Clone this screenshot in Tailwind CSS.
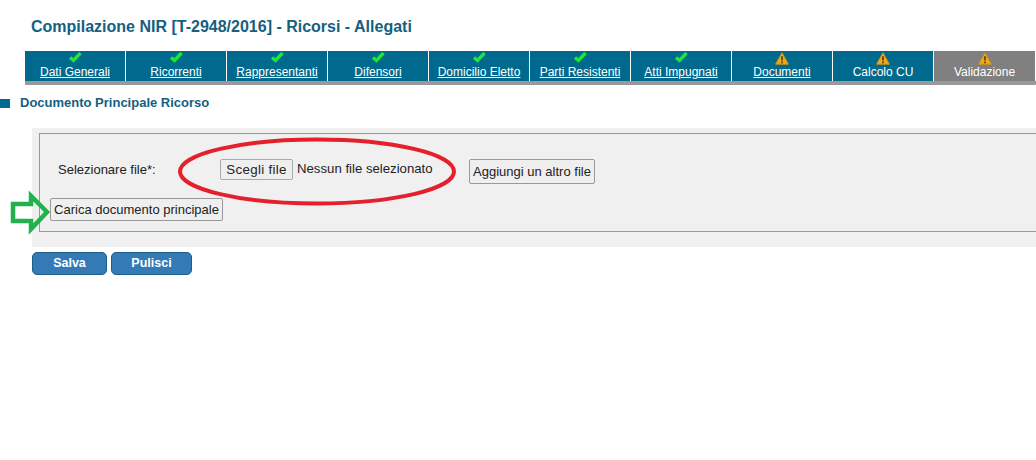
<!DOCTYPE html>
<html lang="it">
<head>
  <meta charset="UTF-8">
  <meta name="viewport" content="width=device-width, initial-scale=1.0">
  <title>Compilazione NIR</title>
  <script src="https://cdn.jsdelivr.net/npm/@tailwindcss/browser@4"></script>
</head>
<body class="bg-white h-[460px] w-[1036px] overflow-hidden font-['Liberation_Sans',Arial,sans-serif]">
  <h1 class="pt-[18px] pl-[31px] text-[16px] leading-[18px] font-bold text-[#15607f] h-[51px]">Compilazione NIR [T-2948/2016] - Ricorsi - Allegati</h1>

  <!-- tabs -->
  <nav class="ml-[25px] border-b-4 border-[#999999] flex h-[34px] text-[12px] leading-[14px] text-white text-center">
    <a class="w-[101px] h-[30px] bg-[#006a8e] border-r border-white flex flex-col items-center">
      <svg class="w-[14px] h-[11px] mt-[1px]" viewBox="0 0 14 11"><path d="M2 5.5 L5.5 8.5 L12.5 1" fill="none" stroke="#1de838" stroke-width="3.4"/></svg>
      <span class="underline mt-[2px]">Dati Generali</span>
    </a>
    <a class="w-[101px] h-[30px] bg-[#006a8e] border-r border-white flex flex-col items-center">
      <svg class="w-[14px] h-[11px] mt-[1px]" viewBox="0 0 14 11"><path d="M2 5.5 L5.5 8.5 L12.5 1" fill="none" stroke="#1de838" stroke-width="3.4"/></svg>
      <span class="underline mt-[2px]">Ricorrenti</span>
    </a>
    <a class="w-[101px] h-[30px] bg-[#006a8e] border-r border-white flex flex-col items-center">
      <svg class="w-[14px] h-[11px] mt-[1px]" viewBox="0 0 14 11"><path d="M2 5.5 L5.5 8.5 L12.5 1" fill="none" stroke="#1de838" stroke-width="3.4"/></svg>
      <span class="underline mt-[2px]">Rappresentanti</span>
    </a>
    <a class="w-[101px] h-[30px] bg-[#006a8e] border-r border-white flex flex-col items-center">
      <svg class="w-[14px] h-[11px] mt-[1px]" viewBox="0 0 14 11"><path d="M2 5.5 L5.5 8.5 L12.5 1" fill="none" stroke="#1de838" stroke-width="3.4"/></svg>
      <span class="underline mt-[2px]">Difensori</span>
    </a>
    <a class="w-[101px] h-[30px] bg-[#006a8e] border-r border-white flex flex-col items-center">
      <svg class="w-[14px] h-[11px] mt-[1px]" viewBox="0 0 14 11"><path d="M2 5.5 L5.5 8.5 L12.5 1" fill="none" stroke="#1de838" stroke-width="3.4"/></svg>
      <span class="underline mt-[2px]">Domicilio Eletto</span>
    </a>
    <a class="w-[101px] h-[30px] bg-[#006a8e] border-r border-white flex flex-col items-center">
      <svg class="w-[14px] h-[11px] mt-[1px]" viewBox="0 0 14 11"><path d="M2 5.5 L5.5 8.5 L12.5 1" fill="none" stroke="#1de838" stroke-width="3.4"/></svg>
      <span class="underline mt-[2px]">Parti Resistenti</span>
    </a>
    <a class="w-[101px] h-[30px] bg-[#006a8e] border-r border-white flex flex-col items-center">
      <svg class="w-[14px] h-[11px] mt-[1px]" viewBox="0 0 14 11"><path d="M2 5.5 L5.5 8.5 L12.5 1" fill="none" stroke="#1de838" stroke-width="3.4"/></svg>
      <span class="underline mt-[2px]">Atti Impugnati</span>
    </a>
    <a class="w-[101px] h-[30px] bg-[#006a8e] border-r border-white flex flex-col items-center">
      <svg class="w-[14px] h-[13px] mt-[1px]" viewBox="0 0 14 13"><path d="M7 .8 L13.4 12.2 H.6 Z" fill="#ecaa1e" stroke="#d1920f" stroke-linejoin="round"/><path d="M7 4.2 V8.6 M7 9.6 V11.2" stroke="#4a3000" stroke-width="1.5"/></svg>
      <span class="underline">Documenti</span>
    </a>
    <a class="w-[101px] h-[30px] bg-[#006a8e] border-r border-white flex flex-col items-center">
      <svg class="w-[14px] h-[13px] mt-[1px]" viewBox="0 0 14 13"><path d="M7 .8 L13.4 12.2 H.6 Z" fill="#ecaa1e" stroke="#d1920f" stroke-linejoin="round"/><path d="M7 4.2 V8.6 M7 9.6 V11.2" stroke="#4a3000" stroke-width="1.5"/></svg>
      <span>Calcolo CU</span>
    </a>
    <a class="w-[101px] h-[30px] bg-[#808080] flex flex-col items-center">
      <svg class="w-[14px] h-[13px] mt-[1px]" viewBox="0 0 14 13"><path d="M7 .8 L13.4 12.2 H.6 Z" fill="#ecaa1e" stroke="#d1920f" stroke-linejoin="round"/><path d="M7 4.2 V8.6 M7 9.6 V11.2" stroke="#4a3000" stroke-width="1.5"/></svg>
      <span>Validazione</span>
    </a>
  </nav>

  <!-- section heading -->
  <div class="flex items-center h-[14px] mt-[11px] text-[13px] font-bold text-[#15607f]">
    <span class="w-[10px] h-[9px] bg-[#006a8e]"></span>
    <span class="ml-[10px]">Documento Principale Ricorso</span>
  </div>

  <main class="relative pt-[18px]">
    <div class="ml-[32px] h-[119px] bg-[#f0f0f0] pl-[7px] pt-[5px]">
      <div class="h-[99px] border-l border-y border-[#999999] text-[13px] text-[#222222]">
        <div class="flex pt-[25px] h-[64px]">
          <label class="ml-[18px] w-[162px] pt-[3px] leading-[15px]">Selezionare file*:</label>
          <button class="w-[73px] h-[21px] bg-[#efefef] border border-[#aaaaaa] rounded-[2px] text-[13.33px] tracking-[0.3px] leading-[18px]">Scegli file</button>
          <span class="ml-[4px] w-[172px] pt-[2px] text-[13.2px] leading-[15px]">Nessun file selezionato</span>
          <button class="w-[126px] h-[25px] bg-[#efefef] border border-[#999999] rounded-[2px] text-[13px] leading-[22px]">Aggiungi un altro file</button>
        </div>
        <button class="ml-[10px] w-[173px] h-[23px] bg-[#efefef] border border-[#999999] rounded-[2px] text-[13px] leading-[20px]">Carica documento principale</button>
      </div>
    </div>

    <div class="ml-[32px] mt-[5px] flex gap-[4px] text-[12.5px] font-bold text-white">
      <button class="w-[75px] h-[23px] bg-[#337ab7] border border-[#1d5f87] rounded-[5px]">Salva</button>
      <button class="w-[81px] h-[23px] bg-[#337ab7] border border-[#1d5f87] rounded-[5px]">Pulisci</button>
    </div>

    <!-- hand-drawn annotations over the form; main starts at y=110 -->
    <svg class="absolute left-0 top-0 pointer-events-none" width="1036" height="200" viewBox="0 0 1036 200">
      <ellipse cx="317" cy="61.5" rx="137" ry="32" fill="none" stroke="#e3202c" stroke-width="4"/>
      <path d="M13 94 H31 V86 L47 102 L31 119 V111 H13 Z" fill="none" stroke="#22b14c" stroke-width="4.5" stroke-linejoin="miter"/>
    </svg>
  </main>
</body>
</html>
